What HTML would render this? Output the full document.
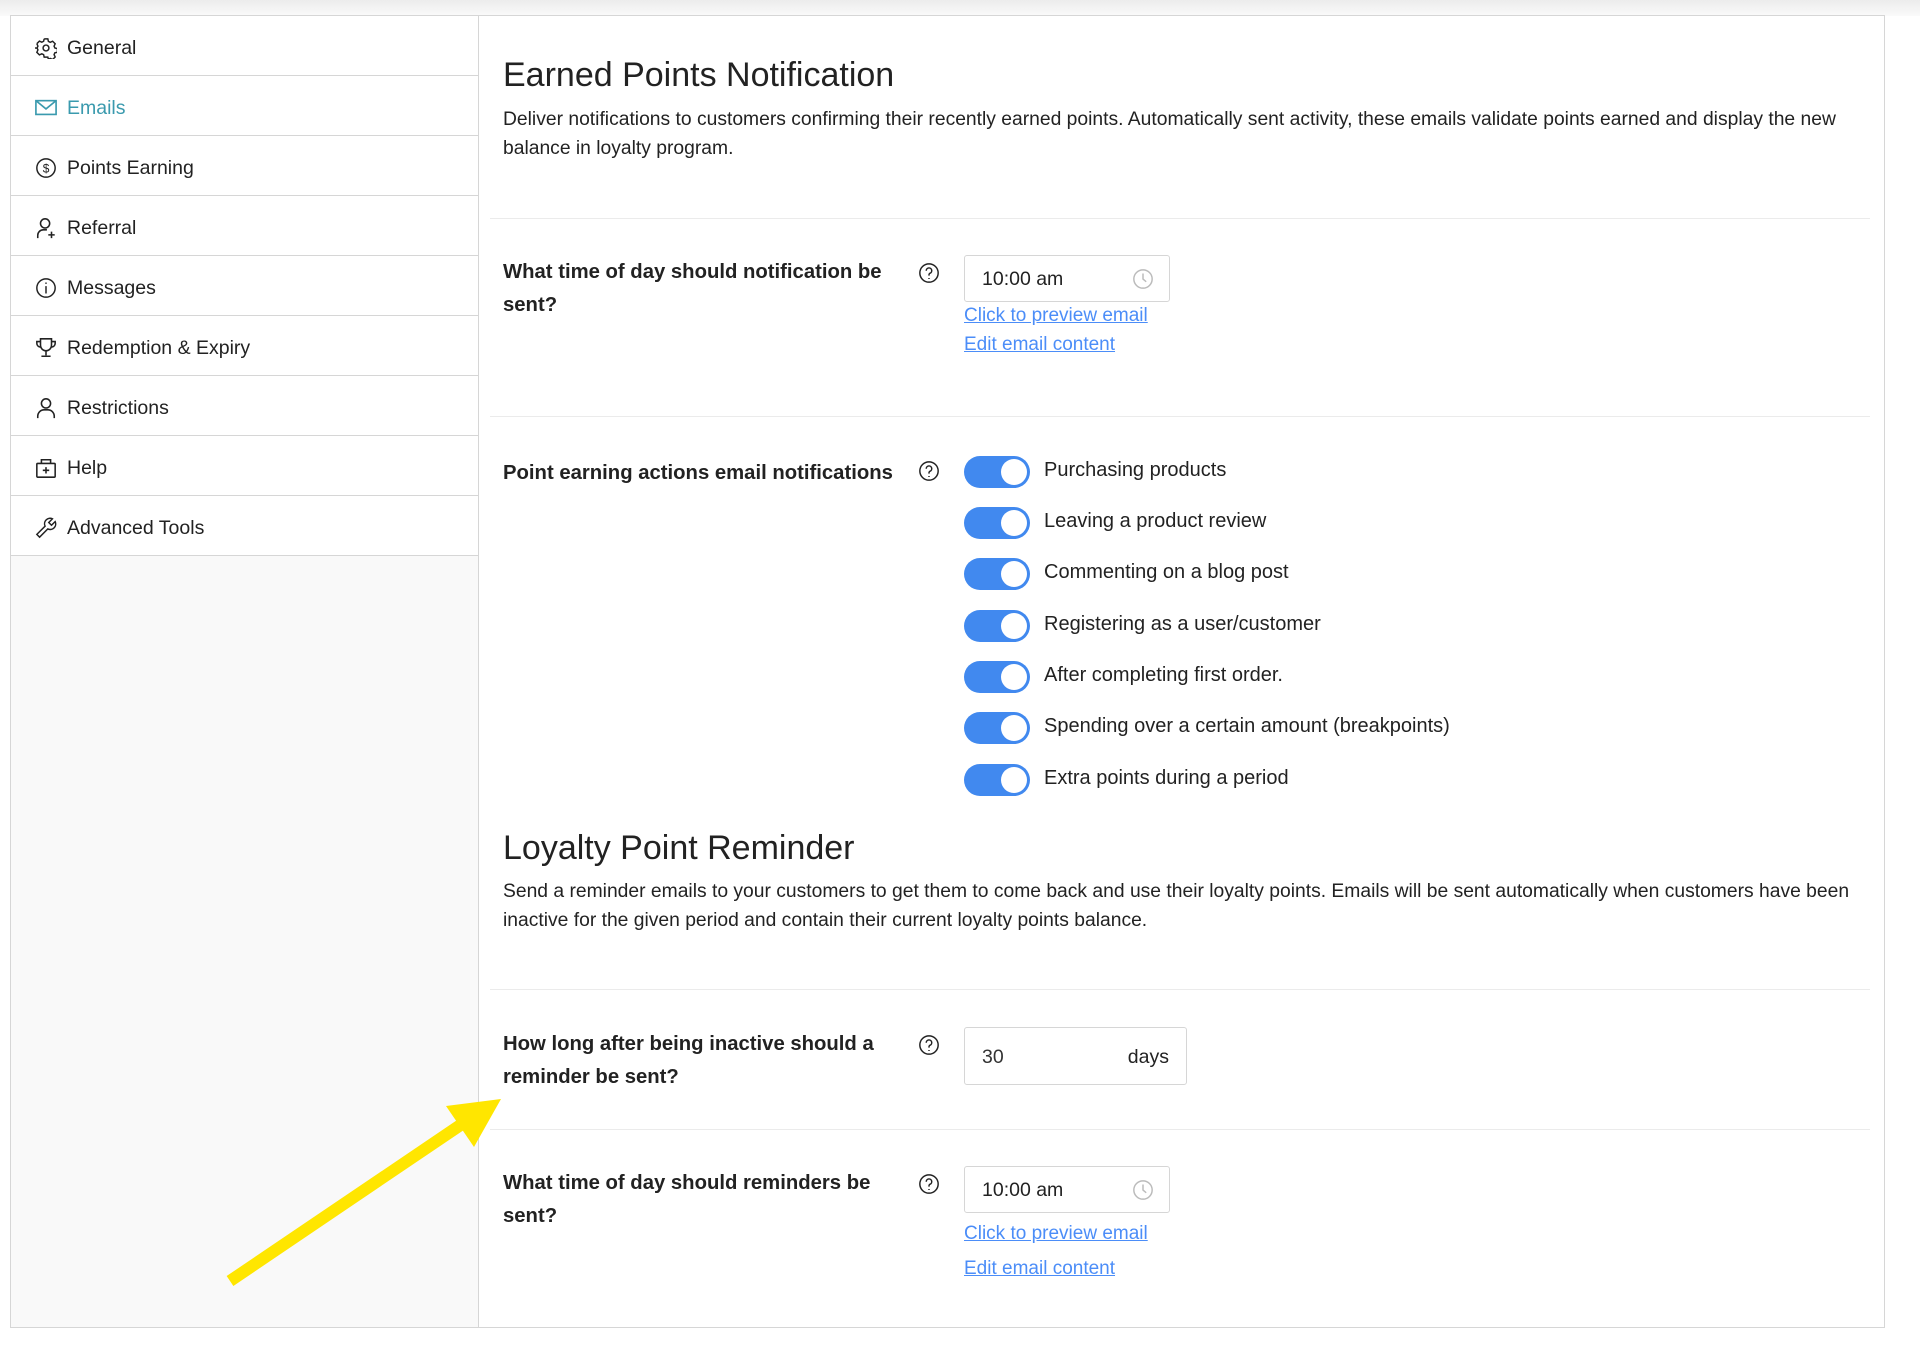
<!DOCTYPE html>
<html><head><meta charset="utf-8"><style>
*{box-sizing:border-box;margin:0;padding:0}
body{width:1920px;height:1350px;background:#fff;font-family:"Liberation Sans",sans-serif;color:#222;position:relative;overflow:hidden}
.top{position:absolute;left:0;top:0;width:1920px;height:16px;background:linear-gradient(#ececec,#fafafa)}
.wrap{position:absolute;left:10px;top:15px;width:1875px;height:1313px;border:1px solid #d6d6d6;background:#fff}
.side{position:absolute;left:10px;top:15px;width:469px;height:1313px;background:#f9f9f9;border:1px solid #d6d6d6}
.item{position:absolute;left:0;width:467px;height:60px;background:#fff;border-bottom:1px solid #d6d6d6;font-size:19.5px;line-height:64px;padding-left:56px}
.item svg{position:absolute;left:24px;top:21px}
.abs{position:absolute;white-space:nowrap}
h2{position:absolute;font-weight:normal;font-size:34px;left:503px;white-space:nowrap;color:#222}
.desc{position:absolute;left:503px;font-size:19.3px;line-height:29px;white-space:nowrap;color:#222}
.sep{position:absolute;left:490px;width:1380px;height:1px;background:#ebebeb}
.q{position:absolute;left:503px;font-weight:bold;font-size:20.3px;line-height:33px;white-space:nowrap;color:#222}
.help{position:absolute;left:918px}
.inp{position:absolute;left:964px;border:1px solid #d6d6d6;border-radius:3px;background:#fff;font-size:19.5px}
.lnk{position:absolute;left:964px;color:#4b8df8;text-decoration:underline;font-size:19px;white-space:nowrap}
.tg{position:absolute;left:964px;width:66px;height:32px;border-radius:16px;background:#4189ef}
.tg::after{content:"";position:absolute;right:3px;top:3px;width:26px;height:26px;border-radius:50%;background:#fff}
.tl{position:absolute;left:1044px;font-size:20px;white-space:nowrap;color:#222}
</style></head><body>
<div class="top"></div>
<div class="wrap"></div>
<div class="side">
<div class="item" style="top:0"><svg width="22" height="22" viewBox="0 0 24 24" fill="none" stroke="#222" stroke-width="1.6"><circle cx="12" cy="12" r="3.2"/><path d="M10 2h4l.6 2.8 2 1 2.6-1.2 2.8 2.8-1.2 2.6.9 2 2.8.6v4l-2.8.6-.9 2 1.2 2.6-2.8 2.8-2.6-1.2-2 .9L14 22h-4l-.6-2.8-2-.9-2.6 1.2L2 16.7l1.2-2.6-.9-2L-.5 12"/><path d="M2 7.3l2.8-2.8 2.6 1.2 2-1L10 2M2 7.3l1.2 2.6-.9 2"/></svg>General</div>
<div class="item" style="top:60px;color:#3a9aae"><svg width="22" height="22" viewBox="0 0 24 24" fill="none" stroke="#3a9aae" stroke-width="1.8"><rect x="1" y="4" width="22" height="15"/><path d="M1 4l11 9 11-9"/></svg>Emails</div>
<div class="item" style="top:120px"><svg width="22" height="22" viewBox="0 0 24 24" fill="none" stroke="#222" stroke-width="1.6"><circle cx="12" cy="12" r="10"/><text x="12" y="17" font-size="13" text-anchor="middle" fill="#222" stroke="none" font-family="Liberation Sans">$</text></svg>Points Earning</div>
<div class="item" style="top:180px"><svg width="22" height="22" viewBox="0 0 24 24" fill="none" stroke="#222" stroke-width="1.7"><circle cx="11" cy="7" r="5"/><path d="M3 23v-3a6 6 0 0 1 6-6h4M18 16v7M14.5 19.5h7"/></svg>Referral</div>
<div class="item" style="top:240px"><svg width="22" height="22" viewBox="0 0 24 24" fill="none" stroke="#222" stroke-width="1.6"><circle cx="12" cy="12" r="10"/><path d="M12 10v8M12 6v1.5"/></svg>Messages</div>
<div class="item" style="top:300px"><svg width="22" height="22" viewBox="0 0 24 24" fill="none" stroke="#222" stroke-width="1.7"><path d="M6 2h12v7a6 6 0 0 1-12 0zM6 5H2v2a4 4 0 0 0 4 4M18 5h4v2a4 4 0 0 1-4 4M12 15v5M7 21h10"/></svg>Redemption &amp; Expiry</div>
<div class="item" style="top:360px"><svg width="22" height="22" viewBox="0 0 24 24" fill="none" stroke="#222" stroke-width="1.7"><circle cx="12" cy="7" r="5"/><path d="M3 23v-2a7 7 0 0 1 7-7h4a7 7 0 0 1 7 7v2"/></svg>Restrictions</div>
<div class="item" style="top:420px"><svg width="22" height="22" viewBox="0 0 24 24" fill="none" stroke="#222" stroke-width="1.7"><rect x="2" y="7" width="20" height="15" rx="1"/><path d="M7 7V3h10v4M12 11v7M8.5 14.5h7"/></svg>Help</div>
<div class="item" style="top:480px"><svg width="22" height="22" viewBox="0 0 24 24" fill="none" stroke="#222" stroke-width="1.6"><path d="M2 19l9-9a6 6 0 0 1 8-8l-4 4 3 3 4-4a6 6 0 0 1-8 8l-9 9z"/></svg>Advanced Tools</div>
</div>

<h2 style="top:56px">Earned Points Notification</h2>
<div class="desc" style="top:105px">Deliver notifications to customers confirming their recently earned points. Automatically sent activity, these emails validate points earned and display the new<br>balance in loyalty program.</div>
<div class="sep" style="top:218px"></div>

<div class="q" style="top:256px">What time of day should notification be<br>sent?</div>
<svg class="help" style="top:262px" width="22" height="22" viewBox="0 0 24 24" fill="none" stroke="#222" stroke-width="1.6"><circle cx="12" cy="12" r="10"/><path d="M9 9.5a3 3 0 1 1 4 2.8c-.8.4-1 1-1 2v.5M12 17.5v1"/></svg>
<div class="inp" style="top:255px;width:206px;height:47px"><span class="abs" style="left:17px;top:12px">10:00 am</span><svg class="abs" style="left:167px;top:12px" width="22" height="22" viewBox="0 0 24 24" fill="none" stroke="#bbb" stroke-width="1.6"><circle cx="12" cy="12" r="10"/><path d="M12 6v6l3.5 3"/></svg></div>
<div class="lnk" style="top:305px">Click to preview email</div>
<div class="lnk" style="top:334px">Edit email content</div>
<div class="sep" style="top:416px"></div>

<div class="q" style="top:457px">Point earning actions email notifications</div>
<svg class="help" style="top:460px" width="22" height="22" viewBox="0 0 24 24" fill="none" stroke="#222" stroke-width="1.6"><circle cx="12" cy="12" r="10"/><path d="M9 9.5a3 3 0 1 1 4 2.8c-.8.4-1 1-1 2v.5M12 17.5v1"/></svg>
<div class="tg" style="top:456px"></div><div class="tl" style="top:459px">Purchasing products</div>
<div class="tg" style="top:507px"></div><div class="tl" style="top:510px">Leaving a product review</div>
<div class="tg" style="top:558px"></div><div class="tl" style="top:561px">Commenting on a blog post</div>
<div class="tg" style="top:610px"></div><div class="tl" style="top:613px">Registering as a user/customer</div>
<div class="tg" style="top:661px"></div><div class="tl" style="top:664px">After completing first order.</div>
<div class="tg" style="top:712px"></div><div class="tl" style="top:715px">Spending over a certain amount (breakpoints)</div>
<div class="tg" style="top:764px"></div><div class="tl" style="top:767px">Extra points during a period</div>

<h2 style="top:829px">Loyalty Point Reminder</h2>
<div class="desc" style="top:877px">Send a reminder emails to your customers to get them to come back and use their loyalty points. Emails will be sent automatically when customers have been<br>inactive for the given period and contain their current loyalty points balance.</div>
<div class="sep" style="top:989px"></div>

<div class="q" style="top:1028px">How long after being inactive should a<br>reminder be sent?</div>
<svg class="help" style="top:1034px" width="22" height="22" viewBox="0 0 24 24" fill="none" stroke="#222" stroke-width="1.6"><circle cx="12" cy="12" r="10"/><path d="M9 9.5a3 3 0 1 1 4 2.8c-.8.4-1 1-1 2v.5M12 17.5v1"/></svg>
<div class="inp" style="top:1027px;width:223px;height:58px"><span class="abs" style="left:17px;top:18px;color:#333">30</span><span class="abs" style="right:17px;top:18px">days</span></div>
<div class="sep" style="top:1129px"></div>

<div class="q" style="top:1167px">What time of day should reminders be<br>sent?</div>
<svg class="help" style="top:1173px" width="22" height="22" viewBox="0 0 24 24" fill="none" stroke="#222" stroke-width="1.6"><circle cx="12" cy="12" r="10"/><path d="M9 9.5a3 3 0 1 1 4 2.8c-.8.4-1 1-1 2v.5M12 17.5v1"/></svg>
<div class="inp" style="top:1166px;width:206px;height:47px"><span class="abs" style="left:17px;top:12px">10:00 am</span><svg class="abs" style="left:167px;top:12px" width="22" height="22" viewBox="0 0 24 24" fill="none" stroke="#bbb" stroke-width="1.6"><circle cx="12" cy="12" r="10"/><path d="M12 6v6l3.5 3"/></svg></div>
<div class="lnk" style="top:1223px">Click to preview email</div>
<div class="lnk" style="top:1258px">Edit email content</div>

<svg class="abs" style="left:0;top:0" width="1920" height="1350"><line x1="230" y1="1281" x2="462" y2="1124" stroke="#ffe600" stroke-width="12"/><polygon points="501,1099 446,1106 474,1147" fill="#ffe600"/></svg>
</body></html>
